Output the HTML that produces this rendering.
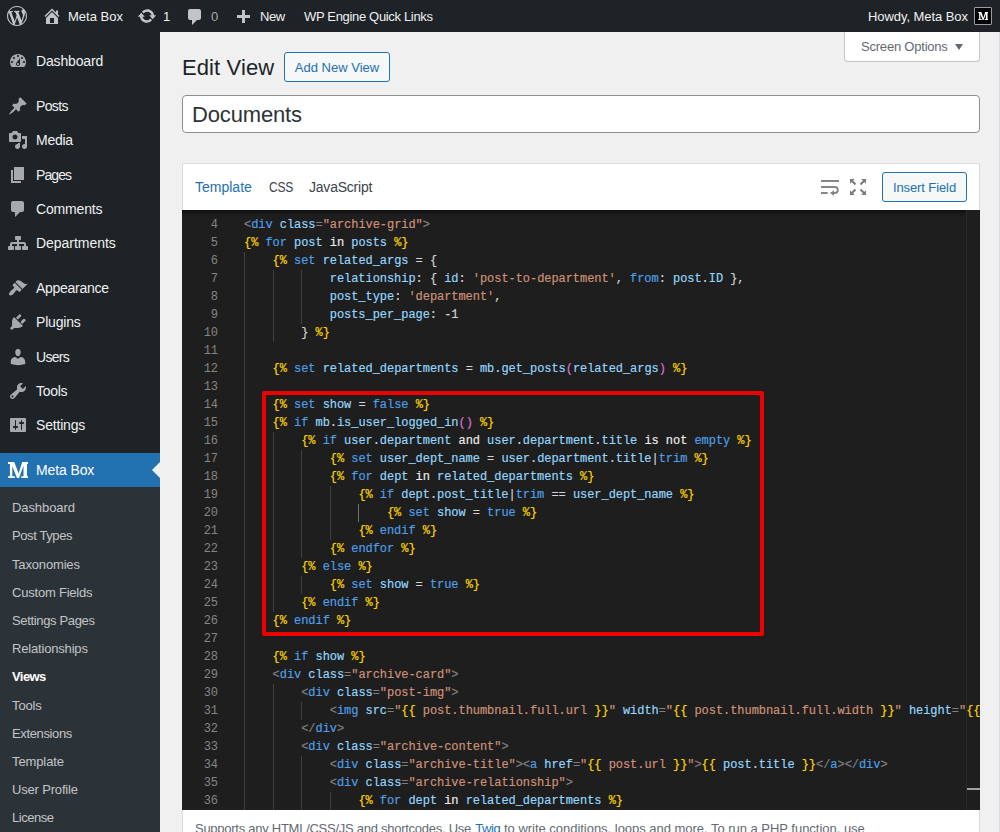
<!DOCTYPE html>
<html>
<head>
<meta charset="utf-8">
<title>Edit View</title>
<style>
*{box-sizing:border-box;margin:0;padding:0}
html,body{width:1000px;height:832px;overflow:hidden}
body{background:#f0f0f1;font-family:"Liberation Sans",sans-serif;font-size:13px;color:#3c434a;position:relative}
.abs{position:absolute;white-space:nowrap}
/* admin bar */
#bar{position:absolute;left:0;top:0;width:1000px;height:32px;background:#1d2327;color:#f0f0f1;font-size:13px}
#bar .t{position:absolute;top:1px;line-height:32px;white-space:nowrap;color:#f0f0f1}
#bar svg{position:absolute;width:20px;height:20px;fill:#c3c4c7}
#av{position:absolute;left:974px;top:7px;width:18px;height:18px;border:1px solid #9a9da3;background:#000;border-radius:1px}
#av span{position:absolute;left:0;top:0;width:16px;text-align:center;font-family:"Liberation Serif",serif;font-weight:700;font-size:12px;line-height:16px;color:#fff}
/* side menu */
#menu{position:absolute;left:0;top:32px;width:160px;height:800px;background:#1d2327;padding-top:12px}
.mi{position:relative;height:34.2px}
.mi span{position:absolute;left:36px;top:8px;font-size:14px;line-height:18.2px;color:#f0f0f1;white-space:nowrap}
.mi svg{position:absolute;left:8px;top:7px;width:20px;height:20px;fill:#a7aaad}
.sep{height:11px}
.cur{background:#2271b1}
.cur span{color:#fff}
.cur:after{content:"";position:absolute;right:0;top:9px;border:8px solid transparent;border-right-color:#f0f0f1}
.mb{position:absolute;left:7px;top:6px;width:22px;text-align:center;font-family:"Liberation Serif",serif;font-weight:700;font-size:22px;line-height:22px;color:#fff}
#sub{background:#2c3338;padding:7px 0 8px}
.si{position:relative;height:28.2px}
.si span{position:absolute;left:12px;top:5px;font-size:13px;line-height:18.2px;color:#c3c4c7;white-space:nowrap}
.si.on span{color:#fff;font-weight:700}
/* content */
h1{position:absolute;left:182px;top:53px;letter-spacing:0.1px;font-size:22px;font-weight:400;line-height:30px;color:#1d2327;white-space:nowrap}
.btn{position:absolute;border:1px solid #2271b1;border-radius:3px;background:#f6f7f7;color:#2271b1;font-size:13px;text-align:center;white-space:nowrap}
#title{position:absolute;left:182px;top:95px;width:798px;height:38px;border:1px solid #8c8f94;border-radius:4px;background:#fff}
#title span{position:absolute;left:9px;top:3px;letter-spacing:-0.15px;font-size:22px;line-height:32px;color:#2c3338}
#scr{position:absolute;left:844px;top:32px;width:136px;height:30px;border:1px solid #c3c4c7;border-top:none;border-radius:0 0 4px 4px;background:#fff;color:#646970;font-size:13px;line-height:28px}
#box{position:absolute;left:182px;top:163px;width:798px;height:680px;border:1px solid #dcdcde;background:#fff}
#tabs .tb{position:absolute;top:14px;font-size:14px;line-height:18px;color:#3c434a;white-space:nowrap}
#ed{position:absolute;left:-1px;top:46px;width:798px;height:599.5px;background:#1e1e1e;overflow:hidden;font-family:"Liberation Mono",monospace;font-size:12px;letter-spacing:-0.053px;color:#d4d4d4}
.ln{position:absolute;left:0;height:18px;line-height:18px;width:1200px;white-space:pre}
.ln u{position:absolute;left:0;top:0;width:36px;text-align:right;text-decoration:none;color:#858585}
.ln pre{position:absolute;left:62px;top:0;font:inherit;letter-spacing:inherit;line-height:18px}
.ln i{font-style:normal;-webkit-text-stroke:0.18px currentColor}
.y{color:#ffd700}.k{color:#4f9fe6}.v{color:#94d6fd}.s{color:#ce9178}.g{color:#808080}.w{color:#d4d4d4}.b{color:#ececec}.p{color:#da70d6}
.gd{position:absolute;width:1px;background:#404040}.ga{background:#707070}
#red{position:absolute;left:80px;top:181px;width:502px;height:245px;border:4px solid #ec0000;border-radius:2px}
.hp{top:656px;font-size:13px;line-height:18px;color:#646970;letter-spacing:-0.118px}
</style>
</head>
<body>

<!-- ADMIN BAR -->
<div id="bar">
  <svg viewBox="0 0 20 20" style="left:7px;top:6px"><path d="M20 10c0-5.51-4.49-10-10-10C4.48 0 0 4.49 0 10c0 5.52 4.48 10 10 10 5.51 0 10-4.48 10-10zM7.78 15.37L4.37 6.22c.55-.02 1.17-.08 1.17-.08.5-.06.44-1.13-.06-1.11 0 0-1.45.11-2.37.11-.18 0-.37 0-.58-.01C4.12 2.69 6.87 1.11 10 1.11c2.33 0 4.45.87 6.05 2.34-.68-.11-1.65.39-1.65 1.58 0 .74.45 1.36.9 2.1.35.61.55 1.36.55 2.46 0 1.49-1.4 5-1.4 5l-3.03-8.37c.54-.02.82-.17.82-.17.5-.05.44-1.25-.06-1.22 0 0-1.44.12-2.38.12-.87 0-2.33-.12-2.33-.12-.5-.03-.56 1.2-.06 1.22l.92.08 1.26 3.41zM17.41 10c.24-.64.74-1.87.43-4.25.7 1.29 1.05 2.71 1.05 4.25 0 3.29-1.73 6.24-4.4 7.78.97-2.59 1.94-5.2 2.92-7.78zM6.1 18.09C3.12 16.65 1.11 13.53 1.11 10c0-1.3.23-2.48.72-3.59C3.25 10.3 4.67 14.2 6.1 18.09zm4.03-6.63l2.58 6.98c-.86.29-1.76.45-2.71.45-.79 0-1.57-.11-2.29-.33.81-2.38 1.62-4.74 2.42-7.1z"/></svg>
  <svg viewBox="0 0 20 20" style="left:42px;top:6px"><path d="M16 8.5l1.53 1.53-1.06 1.06L10 4.62l-6.47 6.47-1.06-1.06L10 2.5l4 4v-2h2v4zm-6-2.46l6 5.99V18H4v-5.970zM12 17v-5H8v5h4z"/></svg>
  <svg viewBox="0 0 20 20" style="left:137.2px;top:6px"><path d="M10.2 3.28c3.53 0 6.43 2.61 6.92 6h2.08l-3.5 4-3.5-4h2.32c-.45-1.97-2.21-3.45-4.32-3.45-1.45 0-2.73.71-3.54 1.78L4.95 5.66C6.23 4.2 8.11 3.28 10.2 3.28zm-.4 13.44c-3.52 0-6.43-2.61-6.92-6H.8l3.5-4c1.17 1.33 2.33 2.67 3.5 4H5.48c.45 1.97 2.21 3.45 4.32 3.45 1.45 0 2.73-.71 3.54-1.78l1.71 1.95c-1.28 1.46-3.15 2.38-5.25 2.38z"/></svg>
  <svg viewBox="0 0 20 20" style="left:185px;top:7.3px"><path d="M5 2h9c1.1 0 2 .9 2 2v7c0 1.1-.9 2-2 2h-2l-5 5v-5H5c-1.1 0-2-.9-2-2V4c0-1.1.9-2 2-2z"/></svg>
  <svg viewBox="0 0 20 20" style="left:233px;top:8px"><path d="M17 7v3h-5v5H9v-5H4V7h5V2h3v5h5z"/></svg>
  <span class="t" style="left:68px">Meta Box</span>
  <span class="t" style="left:163px">1</span>
  <span class="t" style="left:211px;color:#a7aaad">0</span>
  <span class="t" style="left:260px;letter-spacing:-0.4px">New</span>
  <span class="t" style="left:304px;letter-spacing:-0.33px">WP Engine Quick Links</span>
  <span class="t" style="left:868px;letter-spacing:-0.07px">Howdy, Meta Box</span>
  <div id="av"><svg viewBox="0 0 20.3 16.2" style="left:2.800px;top:4.100px;width:10.400px;height:8px;fill:#fff"><path d="M0 0H6.3L10.6 11.500 14.200 0H20.300V2H19V14.200H20.300V16.200H13.300V14.200H15.500V3.800L11 16.200H9L4.300 4.200V14.200H7V16.200H0V14.200H1.900V2H0Z"/></svg></div>
</div>

<!-- SIDE MENU -->
<div id="menu">
  <div class="mi"><svg viewBox="0 0 20 20"><path d="M3.76 16h12.48c1.1-1.37 1.76-3.11 1.76-5 0-4.42-3.58-8-8-8s-8 3.58-8 8c0 1.89.66 3.63 1.76 5zM10 4c.55 0 1 .45 1 1s-.45 1-1 1-1-.45-1-1 .45-1 1-1zM6 6c.55 0 1 .45 1 1s-.45 1-1 1-1-.45-1-1 .45-1 1-1zm8 0c.55 0 1 .45 1 1s-.45 1-1 1-1-.45-1-1 .45-1 1-1zm-5.37 5.55L12 7v6c0 1.1-.9 2-2 2s-2-.9-2-2c0-.57.24-1.08.63-1.45zM4 10c.55 0 1 .45 1 1s-.45 1-1 1-1-.45-1-1 .45-1 1-1zm12 0c.55 0 1 .45 1 1s-.45 1-1 1-1-.45-1-1 .45-1 1-1zm-5 3c0-.55-.45-1-1-1s-1 .45-1 1 .45 1 1 1 1-.45 1-1z"/></svg><span style="letter-spacing:-0.16px">Dashboard</span></div>
  <div class="sep"></div>
  <div class="mi"><svg viewBox="0 0 20 20"><path d="M10.44 3.02l1.82-1.82 6.36 6.35-1.83 1.82c-1.05-.68-2.48-.57-3.41.36l-.75.75c-.92.93-1.04 2.35-.35 3.41l-1.83 1.82-2.41-2.41-2.8 2.79c-.42.42-3.38 2.71-3.8 2.29s1.86-3.39 2.28-3.81l2.79-2.79L4.1 9.36l1.83-1.82c1.05.69 2.48.57 3.4-.36l.75-.75c.93-.92 1.05-2.35.36-3.41z"/></svg><span style="letter-spacing:-0.64px">Posts</span></div>
  <div class="mi"><svg viewBox="0 0 20 20"><path d="M13 11V4c0-.55-.45-1-1-1h-1.67L9 1H5L3.67 3H2c-.55 0-1 .45-1 1v7c0 .55.45 1 1 1h10c.55 0 1-.45 1-1zM7 4.5c1.38 0 2.5 1.12 2.5 2.5S8.38 9.5 7 9.5 4.5 8.38 4.5 7 5.62 4.5 7 4.5zM14 6h5v10.5c0 1.38-1.12 2.5-2.5 2.5S14 17.88 14 16.5s1.12-2.5 2.5-2.5c.17 0 .34.02.5.05V9h-3V6zm-4 8.05V13h2v3.5c0 1.38-1.12 2.5-2.5 2.5S7 17.88 7 16.5 8.12 14 9.5 14c.17 0 .34.02.5.05z"/></svg><span style="letter-spacing:-0.28px">Media</span></div>
  <div class="mi"><svg viewBox="0 0 20 20"><path d="M6 15V2h10v13H6zm-1 1h8v2H3V5h2v11z"/></svg><span style="letter-spacing:-0.90px">Pages</span></div>
  <div class="mi"><svg viewBox="0 0 20 20"><path d="M5 2h9c1.1 0 2 .9 2 2v7c0 1.1-.9 2-2 2h-2l-5 5v-5H5c-1.1 0-2-.9-2-2V4c0-1.1.9-2 2-2z"/></svg><span style="letter-spacing:-0.17px">Comments</span></div>
  <div class="mi"><svg viewBox="0 0 20 20"><path d="M18 13h1c.55 0 1 .45 1 1v2.01c0 .55-.45 1-1 1h-4c-.55 0-1-.45-1-1V14c0-.55.45-1 1-1h1v-2h-5v2h1c.55 0 1 .45 1 1v2.01c0 .55-.45 1-1 1H8c-.55 0-1-.45-1-1V14c0-.55.45-1 1-1h1v-2H4v2h1c.55 0 1 .45 1 1v2.01c0 .55-.45 1-1 1H1c-.55 0-1-.45-1-1V14c0-.55.45-1 1-1h1v-2c0-1.1.9-2 2-2h5V7H8c-.55 0-1-.45-1-1V3.99c0-.55.45-1 1-1h4c.55 0 1 .45 1 1V6c0 .55-.45 1-1 1h-1v2h5c1.1 0 2 .9 2 2v2z"/></svg><span style="letter-spacing:-0.03px">Departments</span></div>
  <div class="sep"></div>
  <div class="mi"><svg viewBox="0 0 20 20"><path d="M14.48 11.06L7.41 3.99l1.5-1.5c.5-.56 2.3-.47 3.51.32 1.21.8 1.43 1.28 2.91 2.1 1.18.64 2.45 1.26 4.45.85zm-.71.71L6.7 4.7 4.93 6.47c-.39.39-.39 1.02 0 1.41l1.06 1.06c.39.39.39 1.03 0 1.42-.6.6-1.43 1.11-2.21 1.69-.35.26-.7.53-1.01.84C1.43 14.23.4 16.08 1.4 17.07c.99 1 2.84-.03 4.18-1.36.31-.31.58-.66.85-1.02.57-.78 1.08-1.61 1.69-2.21.39-.39 1.02-.39 1.41 0l1.06 1.06c.39.39 1.02.39 1.41 0z"/></svg><span style="letter-spacing:-0.28px">Appearance</span></div>
  <div class="mi"><svg viewBox="0 0 20 20"><path d="M13.11 4.36L9.87 7.6 8 5.73l3.24-3.24c.35-.34 1.05-.2 1.56.32.52.51.66 1.21.31 1.55zm-8 1.77l.91-1.12 9.01 9.01-1.19.84c-.71.71-2.63 1.16-3.82 1.16H6.14L4.9 17.26c-.59.59-1.54.59-2.12 0-.59-.58-.59-1.53 0-2.12l1.24-1.24v-3.88c0-1.13.4-3.19 1.09-3.89zm7.26 3.97l3.24-3.24c.34-.35 1.04-.21 1.55.31.52.51.66 1.21.31 1.55l-3.24 3.25z"/></svg><span style="letter-spacing:-0.20px">Plugins</span></div>
  <div class="mi"><svg viewBox="0 0 20 20"><path d="M10 9.25c-2.27 0-2.73-3.44-2.73-3.44C7 4.02 7.82 2 9.97 2c2.16 0 2.98 2.02 2.71 3.81 0 0-.41 3.44-2.68 3.44zm0 2.57L12.72 10c2.39 0 4.52 2.33 4.52 4.53v2.49s-3.65 1.13-7.24 1.13c-3.65 0-7.24-1.13-7.24-1.13v-2.49c0-2.25 1.94-4.48 4.47-4.48z"/></svg><span style="letter-spacing:-0.70px">Users</span></div>
  <div class="mi"><svg viewBox="0 0 20 20"><path d="M16.68 9.77c-1.34 1.34-3.3 1.67-4.95.99l-5.41 6.52c-.99.99-2.59.99-3.58 0s-.99-2.59 0-3.57l6.52-5.42c-.68-1.65-.35-3.61.99-4.950 1.28-1.28 3.12-1.62 4.72-1.06l-2.89 2.89 2.82 2.82 2.86-2.87c.53 1.58.18 3.39-1.08 4.65zM3.81 16.21c.4.39 1.04.39 1.43 0 .4-.4.4-1.04 0-1.43-.39-.4-1.03-.4-1.43 0-.39.39-.39 1.03 0 1.43z"/></svg><span style="letter-spacing:-0.28px">Tools</span></div>
  <div class="mi"><svg viewBox="0 0 20 20"><path d="M18 16V4c0-.55-.45-1-1-1H3c-.55 0-1 .45-1 1v12c0 .55.45 1 1 1h14c.55 0 1-.45 1-1zM8 11h1c.55 0 1 .45 1 1s-.45 1-1 1H8v1.5c0 .28-.22.5-.5.5s-.5-.22-.5-.5V13H6c-.55 0-1-.45-1-1s.45-1 1-1h1V5.5c0-.28.22-.5.5-.5s.5.22.5.5V11zm5-2h-1c-.55 0-1-.45-1-1s.45-1 1-1h1V5.5c0-.28.22-.5.5-.5s.5.22.5.5V7h1c.55 0 1 .45 1 1s-.45 1-1 1h-1v5.500c0 .28-.22.5-.5.5s-.5-.22-.5-.5V9z"/></svg><span style="letter-spacing:-0.19px">Settings</span></div>
  <div class="sep"></div>
  <div class="mi cur"><svg viewBox="0 0 20.3 16.2" style="left:7.850px;top:8.700px;width:20.300px;height:16.200px;fill:#fff"><path d="M0 0H6.3L10.6 11.500 14.200 0H20.300V2H19V14.200H20.300V16.200H13.300V14.200H15.500V3.800L11 16.200H9L4.300 4.200V14.200H7V16.200H0V14.200H1.900V2H0Z"/></svg><span style="letter-spacing:-0.12px">Meta Box</span></div>
  <div id="sub">
    <div class="si"><span style="letter-spacing:-0.09px">Dashboard</span></div>
    <div class="si"><span style="letter-spacing:-0.40px">Post Types</span></div>
    <div class="si"><span style="letter-spacing:-0.16px">Taxonomies</span></div>
    <div class="si"><span style="letter-spacing:-0.21px">Custom Fields</span></div>
    <div class="si"><span style="letter-spacing:-0.35px">Settings Pages</span></div>
    <div class="si"><span style="letter-spacing:-0.18px">Relationships</span></div>
    <div class="si on"><span style="letter-spacing:-0.58px">Views</span></div>
    <div class="si"><span style="letter-spacing:-0.12px">Tools</span></div>
    <div class="si"><span style="letter-spacing:-0.36px">Extensions</span></div>
    <div class="si"><span style="letter-spacing:-0.11px">Template</span></div>
    <div class="si"><span style="letter-spacing:-0.17px">User Profile</span></div>
    <div class="si"><span style="letter-spacing:-0.46px">License</span></div>
  </div>
</div>

<!-- CONTENT -->
<div style="position:absolute;left:999px;top:32px;width:1px;height:800px;background:#dcdcde"></div>
<div id="scr"><span class="abs" style="left:16px;top:1px;letter-spacing:-0.21px">Screen Options</span><i style="position:absolute;left:110px;top:12px;border:4px solid transparent;border-top:6px solid #646970;border-bottom:none"></i></div>
<h1>Edit View</h1>
<div class="btn" style="left:284px;top:52px;width:106px;height:30px;line-height:30px">Add New View</div>
<div id="title"><span>Documents</span></div>

<div id="box">
  <div id="tabs">
    <span class="tb" style="left:12px;color:#2271b1">Template</span>
    <span class="tb" style="left:86px;transform-origin:0 50%;transform:scaleX(.86);letter-spacing:-0.3px">CSS</span>
    <span class="tb" style="left:126px;letter-spacing:-0.22px">JavaScript</span>
  </div>
  <svg class="abs" style="left:637px;top:14px" width="20" height="20" viewBox="0 0 20 20" fill="none" stroke="#868686" stroke-width="1.9"><path d="M1 3h18M1 9h13.800a3 3 0 0 1 0 6H12M1 15h6.700"/><path d="M14 12.200L10 15l4 2.800z" fill="#808080" stroke="none"/></svg>
  <svg class="abs" style="left:666px;top:14px" width="18" height="18" viewBox="0 0 18 18" fill="#7a7a7a" stroke="#7a7a7a" stroke-width="2"><path d="M1 1h4.800L1 5.800zM17 1v4.800L12.200 1zM1 17v-4.800L5.800 17zM17 17h-4.800L17 12.200z" stroke="none"/><path d="M3 3l3.500 3.500M15 3l-3.500 3.500M3 15l3.500-3.500M15 15l-3.500-3.500"/></svg>
  <div class="btn" style="left:699px;top:8px;width:85px;height:30px;line-height:29px;font-size:13px;letter-spacing:-0.1px">Insert Field</div>
  <div id="ed">
<b class="gd" style="left:62px;top:42px;height:558px"></b>
<b class="gd" style="left:91px;top:60px;height:72px"></b>
<b class="gd" style="left:119px;top:60px;height:54px"></b>
<b class="gd" style="left:91px;top:222px;height:180px"></b>
<b class="gd" style="left:119px;top:240px;height:108px"></b>
<b class="gd" style="left:119px;top:366px;height:18px"></b>
<b class="gd" style="left:148px;top:276px;height:54px"></b>
<b class="gd ga" style="left:176px;top:294px;height:18px"></b>
<b class="gd" style="left:91px;top:474px;height:126px"></b>
<b class="gd" style="left:119px;top:492px;height:18px"></b>
<b class="gd" style="left:119px;top:546px;height:54px"></b>
<b class="gd" style="left:148px;top:582px;height:18px"></b>
<div class="ln" style="top:6px"><u>4</u><pre><i class="g">&lt;</i><i class="k">div</i> <i class="v">class</i><i class="g">=</i><i class="s">"archive-grid"</i><i class="g">&gt;</i></pre></div>
<div class="ln" style="top:24px"><u>5</u><pre><i class="y">{%</i> <i class="k">for</i> <i class="v">post</i> <i class="b">in</i> <i class="v">posts</i> <i class="y">%}</i></pre></div>
<div class="ln" style="top:42px"><u>6</u><pre>    <i class="y">{%</i> <i class="k">set</i> <i class="v">related_args</i> <i class="w">=</i> <i class="w">{</i></pre></div>
<div class="ln" style="top:60px"><u>7</u><pre>            <i class="v">relationship</i><i class="w">:</i> <i class="w">{</i> <i class="v">id</i><i class="w">:</i> <i class="s">'post-to-department'</i><i class="w">,</i> <i class="k">from</i><i class="w">:</i> <i class="v">post</i><i class="w">.</i><i class="v">ID</i> <i class="w">}</i><i class="w">,</i></pre></div>
<div class="ln" style="top:78px"><u>8</u><pre>            <i class="v">post_type</i><i class="w">:</i> <i class="s">'department'</i><i class="w">,</i></pre></div>
<div class="ln" style="top:96px"><u>9</u><pre>            <i class="v">posts_per_page</i><i class="w">:</i> <i class="w">-</i><i class="w">1</i></pre></div>
<div class="ln" style="top:114px"><u>10</u><pre>        <i class="w">}</i> <i class="y">%}</i></pre></div>
<div class="ln" style="top:132px"><u>11</u><pre></pre></div>
<div class="ln" style="top:150px"><u>12</u><pre>    <i class="y">{%</i> <i class="k">set</i> <i class="v">related_departments</i> <i class="w">=</i> <i class="v">mb</i><i class="w">.</i><i class="v">get_posts</i><i class="p">(</i><i class="v">related_args</i><i class="p">)</i> <i class="y">%}</i></pre></div>
<div class="ln" style="top:168px"><u>13</u><pre></pre></div>
<div class="ln" style="top:186px"><u>14</u><pre>    <i class="y">{%</i> <i class="k">set</i> <i class="v">show</i> <i class="w">=</i> <i class="k">false</i> <i class="y">%}</i></pre></div>
<div class="ln" style="top:204px"><u>15</u><pre>    <i class="y">{%</i> <i class="k">if</i> <i class="v">mb</i><i class="w">.</i><i class="v">is_user_logged_in</i><i class="p">(</i><i class="p">)</i> <i class="y">%}</i></pre></div>
<div class="ln" style="top:222px"><u>16</u><pre>        <i class="y">{%</i> <i class="k">if</i> <i class="v">user</i><i class="w">.</i><i class="v">department</i> <i class="b">and</i> <i class="v">user</i><i class="w">.</i><i class="v">department</i><i class="w">.</i><i class="v">title</i> <i class="b">is</i> <i class="b">not</i> <i class="k">empty</i> <i class="y">%}</i></pre></div>
<div class="ln" style="top:240px"><u>17</u><pre>            <i class="y">{%</i> <i class="k">set</i> <i class="v">user_dept_name</i> <i class="w">=</i> <i class="v">user</i><i class="w">.</i><i class="v">department</i><i class="w">.</i><i class="v">title</i><i class="w">|</i><i class="k">trim</i> <i class="y">%}</i></pre></div>
<div class="ln" style="top:258px"><u>18</u><pre>            <i class="y">{%</i> <i class="k">for</i> <i class="v">dept</i> <i class="b">in</i> <i class="v">related_departments</i> <i class="y">%}</i></pre></div>
<div class="ln" style="top:276px"><u>19</u><pre>                <i class="y">{%</i> <i class="k">if</i> <i class="v">dept</i><i class="w">.</i><i class="v">post_title</i><i class="w">|</i><i class="k">trim</i> <i class="w">=</i><i class="w">=</i> <i class="v">user_dept_name</i> <i class="y">%}</i></pre></div>
<div class="ln" style="top:294px"><u>20</u><pre>                    <i class="y">{%</i> <i class="k">set</i> <i class="v">show</i> <i class="w">=</i> <i class="k">true</i> <i class="y">%}</i></pre></div>
<div class="ln" style="top:312px"><u>21</u><pre>                <i class="y">{%</i> <i class="k">endif</i> <i class="y">%}</i></pre></div>
<div class="ln" style="top:330px"><u>22</u><pre>            <i class="y">{%</i> <i class="k">endfor</i> <i class="y">%}</i></pre></div>
<div class="ln" style="top:348px"><u>23</u><pre>        <i class="y">{%</i> <i class="k">else</i> <i class="y">%}</i></pre></div>
<div class="ln" style="top:366px"><u>24</u><pre>            <i class="y">{%</i> <i class="k">set</i> <i class="v">show</i> <i class="w">=</i> <i class="k">true</i> <i class="y">%}</i></pre></div>
<div class="ln" style="top:384px"><u>25</u><pre>        <i class="y">{%</i> <i class="k">endif</i> <i class="y">%}</i></pre></div>
<div class="ln" style="top:402px"><u>26</u><pre>    <i class="y">{%</i> <i class="k">endif</i> <i class="y">%}</i></pre></div>
<div class="ln" style="top:420px"><u>27</u><pre></pre></div>
<div class="ln" style="top:438px"><u>28</u><pre>    <i class="y">{%</i> <i class="k">if</i> <i class="v">show</i> <i class="y">%}</i></pre></div>
<div class="ln" style="top:456px"><u>29</u><pre>    <i class="g">&lt;</i><i class="k">div</i> <i class="v">class</i><i class="g">=</i><i class="s">"archive-card"</i><i class="g">&gt;</i></pre></div>
<div class="ln" style="top:474px"><u>30</u><pre>        <i class="g">&lt;</i><i class="k">div</i> <i class="v">class</i><i class="g">=</i><i class="s">"post-img"</i><i class="g">&gt;</i></pre></div>
<div class="ln" style="top:492px"><u>31</u><pre>            <i class="g">&lt;</i><i class="k">img</i> <i class="v">src</i><i class="g">=</i><i class="s">"</i><i class="y">{{</i><i class="s"> post.thumbnail.full.url </i><i class="y">}}</i><i class="s">"</i> <i class="v">width</i><i class="g">=</i><i class="s">"</i><i class="y">{{</i><i class="s"> post.thumbnail.full.width </i><i class="y">}}</i><i class="s">"</i> <i class="v">height</i><i class="g">=</i><i class="s">"</i><i class="y">{{</i><i class="s"> post.thumbnail.full.height </i><i class="y">}}</i><i class="s">"</i><i class="g">&gt;</i></pre></div>
<div class="ln" style="top:510px"><u>32</u><pre>        <i class="g">&lt;/</i><i class="k">div</i><i class="g">&gt;</i></pre></div>
<div class="ln" style="top:528px"><u>33</u><pre>        <i class="g">&lt;</i><i class="k">div</i> <i class="v">class</i><i class="g">=</i><i class="s">"archive-content"</i><i class="g">&gt;</i></pre></div>
<div class="ln" style="top:546px"><u>34</u><pre>            <i class="g">&lt;</i><i class="k">div</i> <i class="v">class</i><i class="g">=</i><i class="s">"archive-title"</i><i class="g">&gt;</i><i class="g">&lt;</i><i class="k">a</i> <i class="v">href</i><i class="g">=</i><i class="s">"</i><i class="y">{{</i><i class="s"> post.url </i><i class="y">}}</i><i class="s">"</i><i class="g">&gt;</i><i class="y">{{</i> <i class="v">post</i><i class="w">.</i><i class="v">title</i> <i class="y">}}</i><i class="g">&lt;/</i><i class="k">a</i><i class="g">&gt;</i><i class="g">&lt;/</i><i class="k">div</i><i class="g">&gt;</i></pre></div>
<div class="ln" style="top:564px"><u>35</u><pre>            <i class="g">&lt;</i><i class="k">div</i> <i class="v">class</i><i class="g">=</i><i class="s">"archive-relationship"</i><i class="g">&gt;</i></pre></div>
<div class="ln" style="top:582px"><u>36</u><pre>                <i class="y">{%</i> <i class="k">for</i> <i class="v">dept</i> <i class="b">in</i> <i class="v">related_departments</i> <i class="y">%}</i></pre></div>
<div id="red"></div>
<div style="position:absolute;left:0;top:0;width:784px;height:6px;box-shadow:#000 0 6px 6px -6px inset"></div>
<div style="position:absolute;left:784px;top:0;width:1px;height:600px;background:#2a2a2a"></div>
<div style="position:absolute;left:784.5px;top:577.5px;width:13.500px;height:2px;background:#a0a0a0"></div>
  </div>
  <div class="abs hp" style="left:12px;letter-spacing:-0.263px">Supports any HTML/CSS/JS and shortcodes. Use</div><div class="abs hp" style="left:292.3px;color:#2271b1;letter-spacing:-0.4px">Twig</div><div class="abs hp" style="left:321px;letter-spacing:-0.024px">to write conditions, loops and more. To run a PHP function, use</div>
</div>

</body>
</html>
